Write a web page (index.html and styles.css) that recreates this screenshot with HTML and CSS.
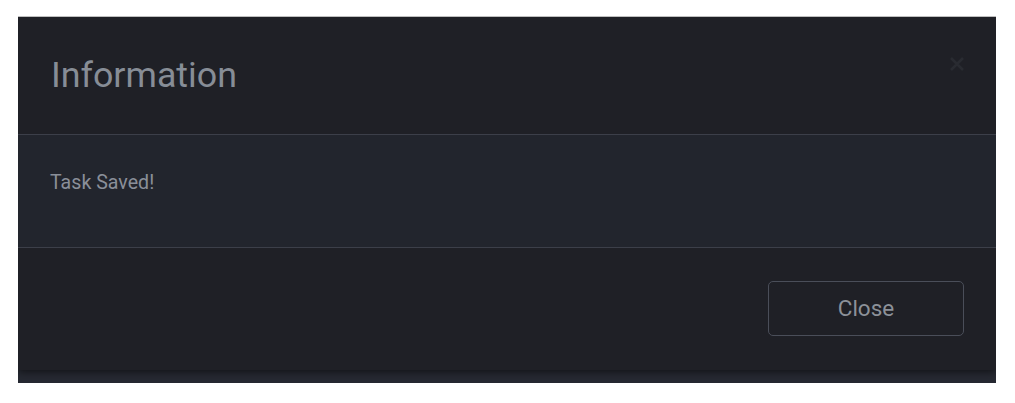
FILE: index.html
```html
<!DOCTYPE html>
<html lang="en">
<head>
<meta charset="utf-8">
<title>Information</title>
<link rel="stylesheet" href="styles.css">
</head>
<body>
<div class="frame">
  <div class="modal">
    <div class="modal-header">
      <h1 class="modal-title">Information</h1>
      <button class="modal-x" aria-label="Close">
        <svg width="16" height="16" viewBox="0 0 16 16"><path d="M2 2 L14 14 M14 2 L2 14" stroke="#292b31" stroke-width="2.6" stroke-linecap="butt"/></svg>
      </button>
    </div>
    <div class="modal-body">
      <p class="message">Task Saved!</p>
    </div>
    <div class="modal-footer">
      <button class="btn-close">Close</button>
    </div>
  </div>
</div>
</body>
</html>
```

FILE: styles.css
```css
html, body {
  margin: 0;
  padding: 0;
  background: #ffffff;
}

body {
  font-family: Roboto, "Liberation Sans", Arial, sans-serif;
  padding-top: 16px;
}

.frame {
  margin-left: 18px;
  width: 978px;
  background: #262932;
  border-top: 1px solid #bfbfbf;
  padding-bottom: 13px;
  overflow: hidden;
}

.modal {
  background: #1f2026;
  box-shadow: 0 2px 8px rgba(0, 0, 0, 0.55);
}

.modal-header {
  height: 117px;
  display: flex;
  align-items: flex-start;
  justify-content: space-between;
  padding: 0 31px 0 33px;
  border-bottom: 1px solid #3c3f49;
}

.modal-title {
  margin: 0;
  padding-top: 38px;
  font-size: 35.8px;
  font-weight: 400;
  line-height: 41px;
  color: #878d96;
}

.modal-x {
  margin-top: 39px;
  padding: 0;
  border: 0;
  background: transparent;
  width: 16px;
  height: 16px;
  display: flex;
}

.modal-body {
  height: 113px;
  background: #22252d;
  border-bottom: 1px solid #3c3f49;
  padding: 0 32px;
  box-sizing: border-box;
}

.message {
  margin: 0;
  padding-top: 36px;
  font-size: 19.6px;
  line-height: 23px;
  color: #8a8f99;
}

.modal-footer {
  height: 122px;
  display: flex;
  justify-content: flex-end;
  align-items: flex-start;
  padding: 33px 32px 0 0;
  box-sizing: border-box;
}

.btn-close {
  width: 196px;
  height: 55px;
  border: 1px solid #4a4e59;
  border-radius: 5px;
  background: transparent;
  color: #8c9199;
  font-family: Roboto, "Liberation Sans", Arial, sans-serif;
  font-size: 22.5px;
  padding: 0 0 2px 0;
}
```
